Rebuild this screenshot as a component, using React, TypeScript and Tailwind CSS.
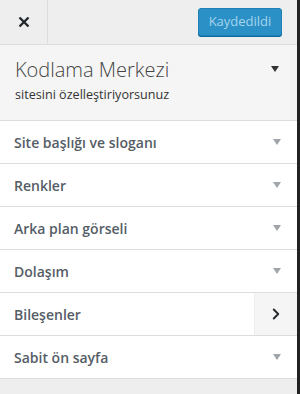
import { ChevronRight } from "lucide-react";

const sections = [
  "Site başlığı ve sloganı",
  "Renkler",
  "Arka plan görseli",
  "Dolaşım",
  "Bileşenler",
  "Sabit ön sayfa",
];

function Caret({ className }: { className: string }) {
  return (
    <svg width="8" height="6" viewBox="0 0 8 6" className={className}>
      <path d="M0 0h8L4 6z" fill="currentColor" />
    </svg>
  );
}

export default function App() {
  return (
    <div className="flex h-[394px] w-[300px] bg-[#222]">
      <div className="flex h-full w-[297px] flex-col bg-[#eee] font-['Open_Sans',sans-serif] text-[#555d66]">
        <div className="flex h-[45px] items-center border-b border-[#ddd]">
          <div className="flex h-full w-[48px] items-center justify-center border-r border-[#ddd] text-[#23282d]">
            <svg width="12" height="12" viewBox="0 0 12 12">
              <path d="M1.5 1.5l9 9M10.5 1.5l-9 9" stroke="currentColor" strokeWidth="2.4" />
            </svg>
          </div>
          <div className="flex flex-1 justify-end pr-[15px]">
            <button className="h-[28px] w-[84px] rounded-[3px] border border-[#1f7fb3] bg-[#2b90c6] text-[13px] text-[#a6d4ed] shadow-[0_1px_0_#0a6a9c]">
              Kaydedildi
            </button>
          </div>
        </div>
        <div className="flex h-[75px] bg-[#f5f5f5] pl-[15px] pr-[18px] pt-[12px]">
          <div className="flex-1">
            <div className="text-[20px] font-light leading-[26px] text-[#444]">Kodlama Merkezi</div>
            <div className="mt-[3px] text-[12.6px] leading-[18px] text-[#333]">sitesini özelleştiriyorsunuz</div>
          </div>
          <Caret className="mt-[9px] text-[#333]" />
        </div>
        <div className="flex flex-col border-t border-[#ddd] bg-white">
          {sections.map((s) => (
            <div key={s} className="flex h-[43px] items-stretch border-b border-[#ddd]">
              <div className="flex flex-1 items-center pl-[14px] text-[14px] font-semibold text-[#555d66]">{s}</div>
              {s === "Bileşenler" ? (
                <div className="flex w-[43px] items-center justify-center border-l border-[#eee] bg-[#f5f5f5] text-[#23282d]">
                  <ChevronRight size={18} strokeWidth={2.5} />
                </div>
              ) : (
                <div className="flex w-[43px] items-center justify-center pl-[3px] text-[#a0a5aa]">
                  <Caret className="" />
                </div>
              )}
            </div>
          ))}
        </div>
      </div>
    </div>
  );
}
